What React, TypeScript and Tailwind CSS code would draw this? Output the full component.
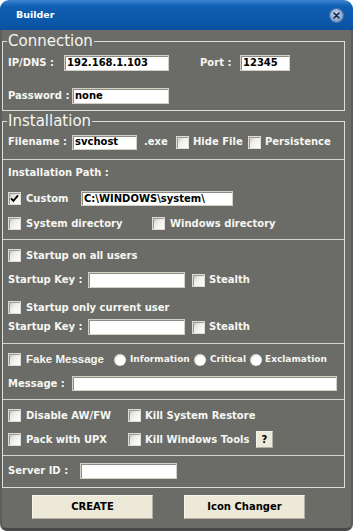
import React from "react";

function Check({ checked = false }: { checked?: boolean }) {
  return (
    <span className="relative flex h-[13px] w-[13px] shrink-0 items-center justify-center border border-[#dedcd4] bg-[linear-gradient(135deg,#c2c2bc_0%,#efefeb_45%,#ffffff_100%)] shadow-[inset_1px_1px_0_#9c9c96]">
      {checked && (
        <svg width="9" height="9" viewBox="0 0 9 9">
          <path d="M1 4.3 L3.4 6.9 L8 1.4" fill="none" stroke="#000" strokeWidth="1.9" />
        </svg>
      )}
    </span>
  );
}

function Radio() {
  return (
    <span className="h-[12px] w-[12px] shrink-0 rounded-full bg-[radial-gradient(circle_at_55%_55%,#ffffff_0%,#ffffff_42%,#d8d8d4_70%,#8e8e8a_100%)]" />
  );
}

function Field({ className, value = "" }: { className: string; value?: string }) {
  return (
    <div
      className={
        "flex shrink-0 items-center border border-[#d4d0c6] bg-white pl-[2px] text-[10px] font-bold leading-none text-black shadow-[inset_1px_1px_0_#8e8b84] " +
        className
      }
    >
      {value}
    </div>
  );
}

function Sep({ className }: { className: string }) {
  return <div className={"h-px bg-[#d4d4d0] " + className} />;
}

export default function App() {
  return (
    <div className="h-[531px] w-[353px] bg-white font-['DejaVu_Sans',sans-serif] text-[10px] font-bold leading-none text-[#f6f6f2]">
      <div className="flex h-[531px] w-[353px] flex-col">
        {/* Title bar */}
        <div className="flex h-[30px] shrink-0 items-center justify-between rounded-t-[9px] bg-[linear-gradient(180deg,#3a82d0_0%,#0f5eb2_22%,#0b58aa_70%,#0a519e_100%)] pl-[16px] pr-[10px]">
          <span className="text-[9.5px] font-bold text-white">Builder</span>
          <span className="flex h-[13px] w-[13px] items-center justify-center rounded-full bg-[radial-gradient(circle_at_45%_35%,#c2d3ea_0%,#8ea9cd_60%,#6b8bb6_100%)] shadow-[0_0_0_1px_#4f74a8]">
            <svg width="7" height="7" viewBox="0 0 7 7">
              <path d="M1 1 L6 6 M6 1 L1 6" stroke="#0e2648" strokeWidth="1.6" strokeLinecap="round" />
            </svg>
          </span>
        </div>

        {/* Body */}
        <div className="flex flex-1 flex-col rounded-b-[7px] border-x-[2px] border-b-[3px] border-x-[#5c5d59] border-b-[#484945] bg-[#6b6c68] pr-[3px]">
          {/* Connection */}
          <fieldset className="mt-[3px] w-[343px] border border-[#dcdcd8] pb-[6px]">
            <legend className="ml-[4px] px-[1px] text-[15px] font-normal leading-[17px]">Connection</legend>
            <div className="mt-[5px] flex h-[16px] items-center pl-[5px]">
              <span className="w-[56px] shrink-0">IP/DNS :</span>
              <Field className="h-[16px] w-[105px]" value="192.168.1.103" />
              <span className="ml-[31px] w-[40px] shrink-0">Port :</span>
              <Field className="h-[16px] w-[50px]" value="12345" />
            </div>
            <div className="mt-[17px] flex h-[16px] items-center pl-[5px]">
              <span className="w-[64px] shrink-0">Password :</span>
              <Field className="h-[16px] w-[97px]" value="none" />
            </div>
          </fieldset>

          {/* Installation */}
          <fieldset className="mt-[2px] w-[343px] border border-[#dcdcd8] pb-[8px]">
            <legend className="ml-[4px] px-[1px] text-[15px] font-normal leading-[17px]">Installation</legend>

            <div className="mt-[4px] flex h-[16px] items-center pl-[5px]">
              <span className="w-[64px] shrink-0">Filename :</span>
              <Field className="h-[15px] w-[65px]" value="svchost" />
              <span className="ml-[7px] w-[32px] shrink-0">.exe</span>
              <Check />
              <span className="ml-[4px] w-[55px] shrink-0">Hide File</span>
              <Check />
              <span className="ml-[4px] shrink-0">Persistence</span>
            </div>

            <Sep className="mt-[9px]" />

            <div className="mt-[6px] flex h-[14px] items-center pl-[5px]">
              <span>Installation Path :</span>
            </div>

            <div className="mt-[11px] flex h-[15px] items-center pl-[5px]">
              <Check checked />
              <span className="ml-[5px] w-[55px] shrink-0">Custom</span>
              <Field className="h-[15px] w-[152px]" value="C:\WINDOWS\system\" />
            </div>

            <div className="mt-[11px] flex h-[13px] items-center pl-[5px]">
              <Check />
              <span className="ml-[5px] w-[126px] shrink-0">System directory</span>
              <Check />
              <span className="ml-[5px] shrink-0">Windows directory</span>
            </div>

            <Sep className="mt-[9px]" />

            <div className="mt-[9px] flex h-[13px] items-center pl-[5px]">
              <Check />
              <span className="ml-[5px]">Startup on all users</span>
            </div>

            <div className="mt-[10px] flex h-[16px] items-center pl-[5px]">
              <span className="w-[80px] shrink-0">Startup Key :</span>
              <Field className="h-[16px] w-[97px]" />
              <span className="ml-[7px]">
                <Check />
              </span>
              <span className="ml-[4px]">Stealth</span>
            </div>

            <div className="mt-[13px] flex h-[13px] items-center pl-[5px]">
              <Check />
              <span className="ml-[5px]">Startup only current user</span>
            </div>

            <div className="mt-[5px] flex h-[16px] items-center pl-[5px]">
              <span className="w-[80px] shrink-0">Startup Key :</span>
              <Field className="h-[16px] w-[97px]" />
              <span className="ml-[7px]">
                <Check />
              </span>
              <span className="ml-[4px]">Stealth</span>
            </div>

            <Sep className="mt-[8px]" />

            <div className="mt-[9px] flex h-[13px] items-center pl-[5px]">
              <Check />
              <span className="ml-[5px] w-[88px] shrink-0 font-['Liberation_Sans',sans-serif] text-[11.5px] font-bold">Fake Message</span>
              <Radio />
              <span className="ml-[4px] w-[64px] shrink-0 text-[9px]">Information</span>
              <Radio />
              <span className="ml-[4px] w-[40px] shrink-0 text-[9px]">Critical</span>
              <Radio />
              <span className="ml-[3px] shrink-0 text-[9px]">Exclamation</span>
            </div>

            <div className="mt-[10px] flex h-[15px] items-center pl-[5px]">
              <span className="w-[64px] shrink-0">Message :</span>
              <Field className="h-[15px] w-[265px]" />
            </div>

            <Sep className="mt-[8px]" />

            <div className="mt-[9px] flex h-[13px] items-center pl-[5px]">
              <Check />
              <span className="ml-[5px] w-[102px] shrink-0">Disable AW/FW</span>
              <Check />
              <span className="ml-[4px] shrink-0">Kill System Restore</span>
            </div>

            <div className="mt-[9px] flex h-[17px] items-center pl-[5px]">
              <Check />
              <span className="ml-[5px] w-[102px] shrink-0">Pack with UPX</span>
              <Check />
              <span className="ml-[4px] w-[111px] shrink-0">Kill Windows Tools</span>
              <button className="flex h-[17px] w-[17px] shrink-0 items-center justify-center border border-[#f4f2ea] border-b-[#b4b0a4] border-r-[#b4b0a4] bg-[#ece9d8] text-[10px] font-bold text-black">
                ?
              </button>
            </div>

            <Sep className="mt-[7px]" />

            <div className="mt-[7px] flex h-[16px] items-center pl-[5px]">
              <span className="w-[72px] shrink-0">Server ID :</span>
              <Field className="h-[16px] w-[97px]" />
            </div>
          </fieldset>

          {/* Buttons */}
          <div className="mt-[7px] flex h-[24px] pl-[30px]">
            <button className="flex h-[24px] w-[121px] items-center justify-center border border-[#f6f4ec] border-b-[#b4b0a4] border-r-[#b4b0a4] bg-[#ece9d8] text-[10px] font-bold text-black">
              CREATE
            </button>
            <button className="ml-[31px] flex h-[24px] w-[121px] items-center justify-center border border-[#f6f4ec] border-b-[#b4b0a4] border-r-[#b4b0a4] bg-[#ece9d8] text-[10px] font-bold text-black">
              Icon Changer
            </button>
          </div>
        </div>
      </div>
    </div>
  );
}
